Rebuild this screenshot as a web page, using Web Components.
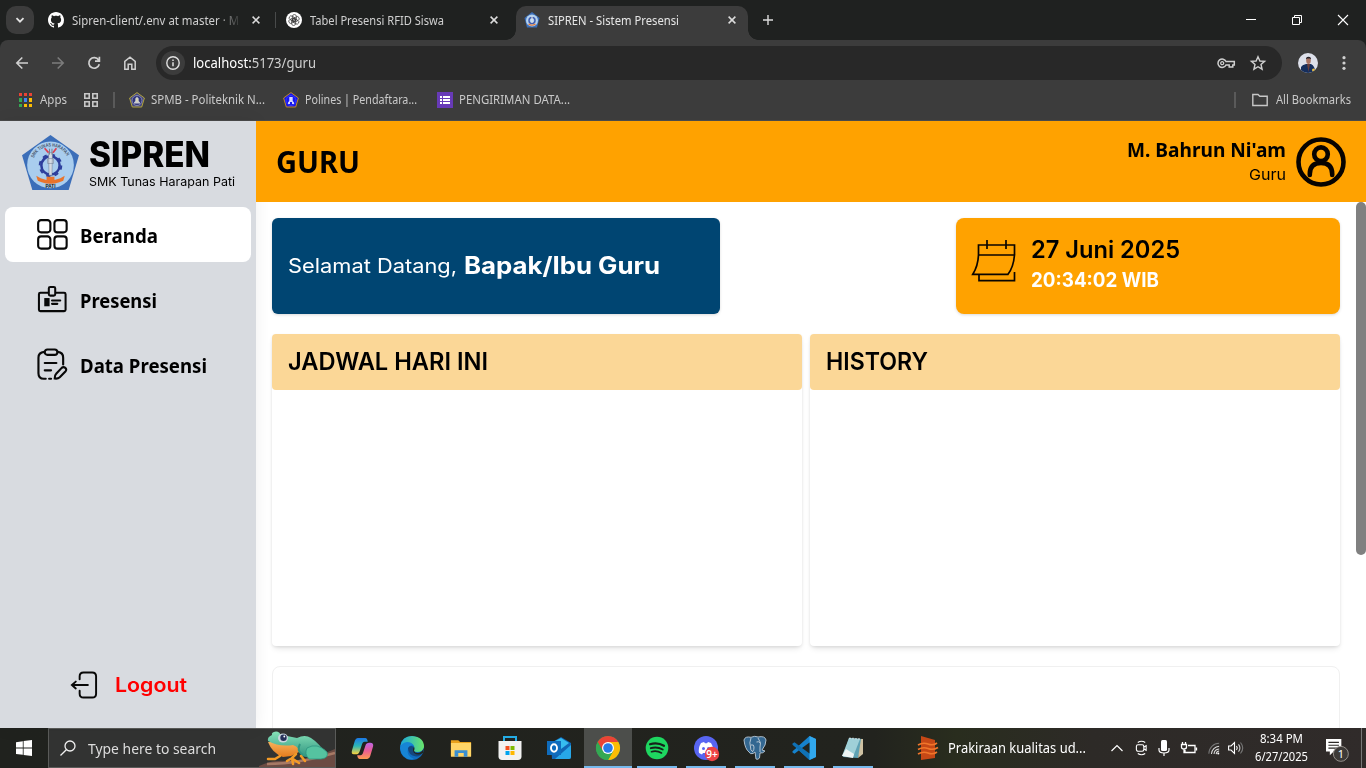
<!DOCTYPE html>
<html lang="id"><head><meta charset="utf-8"><title>SIPREN - Sistem Presensi</title>
<style>html,body{margin:0;height:100%;overflow:hidden;background:#fff}body{font-family:"Noto Sans","Open Sans",sans-serif}</style></head>
<body><desktop-screen></desktop-screen>
<script>
const ICONS={
chev:['0 0 10 10','<path d="M1.5 3.2 5 6.7 8.5 3.2" fill="none" stroke="#e3e3e3" stroke-width="1.8"/>'],
github:['0 0 16 16','<path fill="#fff" d="M8 0C3.58 0 0 3.58 0 8c0 3.54 2.29 6.53 5.47 7.59.4.07.55-.17.55-.38 0-.19-.01-.82-.01-1.49-2.01.37-2.53-.49-2.69-.94-.09-.23-.48-.94-.82-1.13-.28-.15-.68-.52-.01-.53.63-.01 1.08.58 1.23.82.72 1.21 1.87.87 2.33.66.07-.52.28-.87.51-1.07-1.78-.2-3.64-.89-3.64-3.95 0-.87.31-1.59.82-2.15-.08-.2-.36-1.02.08-2.12 0 0 .67-.21 2.2.82.64-.18 1.32-.27 2-.27s1.36.09 2 .27c1.53-1.04 2.2-.82 2.2-.82.44 1.1.16 1.92.08 2.12.51.56.82 1.27.82 2.15 0 3.07-1.87 3.75-3.65 3.95.29.25.54.73.54 1.48 0 1.07-.01 1.93-.01 2.2 0 .21.15.46.55.38A8.01 8.01 0 0 0 16 8c0-4.42-3.58-8-8-8z"/>'],
gpt:['0 0 16 16','<circle cx="8" cy="8" r="8" fill="#fff"/><g fill="none" stroke="#333" stroke-width=".7"><rect x="6.4" y="2.500" width="4" height="6.800" rx="2"/><rect x="6.4" y="2.500" width="4" height="6.800" rx="2" transform="rotate(60 8 8)"/><rect x="6.4" y="2.500" width="4" height="6.800" rx="2" transform="rotate(120 8 8)"/><rect x="6.4" y="2.500" width="4" height="6.800" rx="2" transform="rotate(180 8 8)"/><rect x="6.4" y="2.500" width="4" height="6.800" rx="2" transform="rotate(240 8 8)"/><rect x="6.4" y="2.500" width="4" height="6.800" rx="2" transform="rotate(300 8 8)"/></g>'],
x:['0 0 8 8','<path d="M.6.6 7.4 7.4M7.4.6.6 7.4" stroke="#dcdcdc" stroke-width="1.5"/>'],
plus:['0 0 10 10','<path d="M5 0V10M0 5H10" stroke="#dcdcdc" stroke-width="1.4"/>'],
min:['0 0 10 10','<path d="M0 4.5H10" stroke="#fff"/>'],
restore:['0 0 10 10','<path d="M.5 2.5H7.5V9.5H.5ZM2.5 2.500V.5H9.500V7.500H7.500" fill="none" stroke="#fff"/>'],
wx:['0 0 10 10','<path d="M0 0 10 10M10 0 0 10" stroke="#fff" stroke-width="1.1"/>'],
back:['0 0 14 14','<path d="M13 7H2M7.300 1.500 1.800 7 7.300 12.500" fill="none" stroke="#d0d0d0" stroke-width="1.600"/>'],
fwd:['0 0 14 14','<path d="M1 7H12M6.700 1.500 12.200 7 6.700 12.500" fill="none" stroke="#7c7c7c" stroke-width="1.600"/>'],
reload:['0 0 14 14','<path d="M11.600 4A5.300 5.300 0 1 0 12.300 8.300M12.400 .8V5.200H8" fill="none" stroke="#d0d0d0" stroke-width="1.700"/>'],
home:['0 0 14 14','<path d="M1.800 13.200V5.300L7 1.200 12.200 5.300V13.200H8.800V8.300H5.200V13.200Z" fill="none" stroke="#d0d0d0" stroke-width="1.500"/>'],
info:['0 0 24 24','<circle cx="12" cy="12" r="12" fill="#3c3c3c"/><circle cx="12" cy="12" r="6.200" fill="none" stroke="#e0e0e0" stroke-width="1.400"/><path d="M12 11.300V15.300M12 8.600V10" stroke="#e0e0e0" stroke-width="1.500"/>'],
key:['0 0 18 12','<path d="M9 4.500H17.300V8H15.800V10H12.200V8H9A4.200 4.200 0 1 1 9 4.500Z" fill="none" stroke="#d0d0d0" stroke-width="1.500"/><circle cx="5.200" cy="6.200" r="1.500" fill="none" stroke="#d0d0d0" stroke-width="1.300"/>'],
star:['0 0 16 16','<path d="M8 1.700 9.900 6 14.600 6.400 11 9.500 12.100 14.200 8 11.700 3.900 14.200 5 9.500 1.400 6.400 6.100 6Z" fill="none" stroke="#d0d0d0" stroke-width="1.400"/>'],
face:['0 0 20 20','<defs><clipPath id="c"><circle cx="10" cy="10" r="10"/></clipPath></defs><g clip-path="url(#c)"><path fill="#dde0ea" d="M0 0H20V20H0Z"/><path fill="#152e5c" d="M3 20V14Q4 12 8 11H13Q17 13 17.500 20Z"/><path fill="#6a3d38" d="M9 11 10.500 19 12 11Z"/><ellipse cx="10.500" cy="7.500" rx="2.300" ry="3.500" fill="#a67262"/><path fill="#25222a" d="M8 6.500Q7.700 3.700 10.500 3.700T13 6.500L12 5.500H9Z"/><circle cx="15.500" cy="17" r="1.500" fill="#e8be45"/></g>'],
dots:['0 0 4 14','<g fill="#d0d0d0"><circle cx="2" cy="1.700" r="1.600"/><circle cx="2" cy="7" r="1.600"/><circle cx="2" cy="12.300" r="1.600"/></g>'],
apps:['0 0 14 14','<path fill="#ea4335" d="M0 0H3V3H0ZM5 0H8V3H5ZM10 0H13V3H10Z"/><path fill="#34a853" d="M0 5H3V9H0ZM0 11H3V14H0Z"/><path fill="#4285f4" d="M5 5H8V9H5Z"/><path fill="#fbbc04" d="M10 5H13V9H10ZM5 11H8V14H5ZM10 11H13V14H10Z"/>'],
grid:['0 0 14 14','<path d="M.8.8H5.200V5.200H.8ZM8.800.8H13.200V5.200H8.800ZM.8 8.800H5.200V13.200H.8ZM8.800 8.800H13.200V13.200H8.800Z" fill="none" stroke="#c7c7c7" stroke-width="1.600"/>'],
polA:['0 0 16 16','<path d="M8 .6 15.400 6 12.700 15H3.300L.6 6Z" fill="#45477c" stroke="#b3a63b"/><circle cx="8" cy="8.500" r="5" fill="#30357b" stroke="#9a9cc0" stroke-width=".8"/><path d="M8 4.800 9.700 6.500V9L11 10.500V11.500H5V10.500L6.300 9V6.500Z" fill="#c9cbd0"/><path d="M7.500 6.500H8.500V9.500H7.500Z" fill="#e8e5a0"/>'],
polB:['0 0 16 16','<path d="M8 .6 15.400 6 12.700 15H3.300L.6 6Z" fill="#1414e8" stroke="#c08b28"/><circle cx="8" cy="8.500" r="5" fill="#1515f0" stroke="#4747ff" stroke-width=".7"/><path d="M6.300 5H9.700V9L11 10.500V12H9V10H7V12H5V10.500L6.300 9Z" fill="#d5d6ff"/>'],
form:['0 0 16 16','<path fill="#673ab7" d="M0 0H16V16H0Z"/><path fill="#fff" d="M3 4H5V6H3ZM6 4H13V6H6ZM3 7H5V9H3ZM6 7H13V9H6ZM3 10H5V12H3ZM6 10H13V12H6Z"/>'],
folder:['0 0 16 14','<path d="M.8 1.500H6L7.800 3.200H15.200V12.500H.8Z" fill="none" stroke="#c7c7c7" stroke-width="1.400"/>'],
school:['0 0 58 56','<path fill="#3b6eb9" d="M29 0 58 20.500 47.500 56H10.500L0 20.500Z"/><circle cx="29" cy="30.500" r="23.800" fill="#a9cdee"/><defs><path id="arc" d="M12 23.500A18.500 18.500 0 0 1 46.500 23.500"/></defs><text font-family="Liberation Sans" font-size="5" font-weight="700" fill="#46546b"><textPath href="#arc" textLength="42" lengthAdjust="spacingAndGlyphs">SMK TUNAS HARAPAN</textPath></text><circle cx="29" cy="31" r="9.300" fill="none" stroke="#2d3e9c" stroke-width="2.600"/><circle cx="29" cy="31" r="11" fill="none" stroke="#2d3e9c" stroke-width="2" stroke-dasharray="4.300 4.340"/><path fill="#d5dbe4" stroke="#66758b" stroke-width=".5" d="M27 18H31L30.500 41H27.500ZM26 24H32V29H26Z"/><path d="M28 14V20M30.500 14V20" stroke="#77808e"/><path d="M23 13.500 27 18M35 13.500 31.500 18" stroke="#db4052" stroke-width="1.800"/><path d="M14.500 41.500 19 44Q29 48 39 44L43.500 41.500 42 46.500 38 48Q29 51.500 20 48L16 46.500Z" fill="#e9742c"/><path d="M25 42.500H33V47H25Z" fill="#e9742c"/><text x="29" y="53.800" text-anchor="middle" font-family="Liberation Sans" font-size="4.800" font-weight="700" fill="#111">PATI</text>'],
schoolS:['0 0 16 16','<path fill="#3b6eb9" d="M8 0 15.500 6 13 15.500H3L.5 6Z"/><circle cx="8" cy="8.500" r="6" fill="#b5d2ed"/><circle cx="8" cy="8.500" r="3" fill="none" stroke="#405eb0" stroke-width="1.500"/><path d="M7.500 4H8.500V11H7.500Z" fill="#e7e9ee"/><path d="M4.500 12Q8 14.500 11.500 12" stroke="#e7742c" stroke-width="1.200" fill="none"/>'],
dash:['0 0 32 32','<g fill="none" stroke="#080808" stroke-width="2.200"><rect x="1.200" y="1.200" width="12.600" height="12.600" rx="3"/><rect x="18" y="1.200" width="12.600" height="12.600" rx="3"/><rect x="1.200" y="18" width="12.600" height="12.600" rx="3"/><rect x="18" y="18" width="12.600" height="12.600" rx="3"/></g>'],
badge:['0 0 32 32','<g fill="none" stroke="#080808" stroke-width="2.100"><path d="M12 9H3.500Q2 9 2 10.500V26.500Q2 28 3.500 28H28Q29.500 28 29.500 26.500V10.500Q29.500 9 28 9H19"/><rect x="12.200" y="3" width="6.600" height="9" rx="1.500"/><path d="M15.500 17H24M15.500 20.500H21" stroke-linecap="round"/></g><path fill="#080808" d="M7.500 14.500H13V23H7.500Z"/>'],
clip:['0 0 32 34','<g fill="none" stroke="#080808" stroke-width="2.200" stroke-linecap="round"><path d="M7.500 4Q1.500 4.500 1.500 10V26Q1.500 31.700 7 31.700H9M12.500 31.700H14.500M21.500 4Q27 4.500 27 10V17"/><rect x="8" y="1.500" width="13" height="5.500" rx="2.700"/><path d="M8 15.500H20M8 23H14.500"/><path d="M25.500 20.500Q27.300 18.800 29.200 20.500T29.300 24.200L23.500 30.200Q21.500 32 18.300 31.500 18.200 28 19.800 26.500Z"/></g>'],
logout:['0 0 28 30','<g fill="none" stroke="#080808" stroke-width="2" stroke-linecap="round"><path d="M9.500 8.500V5.500Q9.500 1.500 13.500 1.500H22.500Q26.500 1.500 26.500 5.500V23.500Q26.500 27.500 22.500 27.500H13.500Q9.500 27.500 9.500 23.500V20.500"/><path d="M18 14.500H1.500M5.500 11 1.500 14.500 5.500 18"/></g>'],
user:['0 0 50 50','<g fill="none" stroke="#080300" stroke-width="4.600"><circle cx="25" cy="25" r="22.500"/><circle cx="25" cy="17.200" r="6.800"/><path d="M13.800 38V37Q13.800 26 25 26T36.200 37V38" stroke-linecap="round"/></g>'],
cal:['0 0 44 43','<path d="M6.500 16V6H42.500V16M15 1V10M34 1V10M6.500 16H42.500Q41.500 28 36 35.300H.8Q6 27 6.500 16M7 35.300V41.700H42.500V33" fill="none" stroke="#0a0500" stroke-width="1.700"/>'],
win:['0 0 16 16','<path fill="#fff" d="M0 2.200 6.800 1.200V7.600H0ZM7.600 1.100 16 0V7.600H7.600ZM0 8.400H6.800V14.800L0 13.900ZM7.600 8.400H16V16L7.600 14.900Z"/>'],
search:['0 0 16 16','<circle cx="10" cy="6" r="5" fill="none" stroke="#f0f0f0" stroke-width="1.300"/><path d="M6.300 9.700.5 15.500" stroke="#f0f0f0" stroke-width="1.300"/>'],
frog:['0 0 76 38','<defs><linearGradient id="b" y2="1" x2="0"><stop stop-color="#86e3b9"/><stop offset="1" stop-color="#2b8f7c"/></linearGradient><linearGradient id="o" y2="1" x2="0"><stop stop-color="#f6b05b"/><stop offset="1" stop-color="#e57c1c"/></linearGradient></defs><path d="M0 37Q12 31 26 32L52 30 76 20V38H0Z" fill="#6c4b43"/><path d="M8 35Q38 35 76 24" stroke="#a77965" stroke-width="2.500" fill="none"/><path d="M9 13Q13 24 24 28L32 27 44 21 42 13Z" fill="url(#o)"/><path d="M9 12Q8 8 13 6Q12 3 17 2.500 21 3 21 5L28 7 38 9Q46 5 52 9 60 14 68 26 65 30 52 29L42 27Q41 18 34 16 20 18 9 12Z" fill="url(#b)"/><path d="M48 19Q58 13 68 23 70 29 62 30H50Q45 25 48 19Z" fill="#55c3a0" stroke="#2e9580" stroke-width=".8"/><path d="M41 15Q37 22 44 26" stroke="#2f9581" stroke-width="2" fill="none"/><ellipse cx="24" cy="9" rx="5" ry="4.500" fill="#cad6df"/><circle cx="24.500" cy="8.800" r="3.200" fill="#26305a"/><circle cx="25.300" cy="7.500" r=".9" fill="#fff"/><path d="M37 25 33 29 28 32M33 29 34 35M34 30 40 34M42 27 46 32M21 27 16 30 9 30" stroke="#f39a26" stroke-width="2.500" stroke-linecap="round" fill="none"/>'],
copilot:['0 0 24 24','<defs><linearGradient id="a" y2="1" x2="0"><stop stop-color="#1b78e8"/><stop offset=".5" stop-color="#2cb7b5"/><stop offset="1" stop-color="#ffd23c"/></linearGradient><linearGradient id="d" y2="1" x2="0"><stop stop-color="#bb65e5"/><stop offset=".5" stop-color="#ec5c93"/><stop offset="1" stop-color="#ff9b4f"/></linearGradient></defs><path d="M7 1H15Q17 1 17.500 5H14Q12 5 11 9L9 15Q8 18 5 18H3Q0 18 1 14L4 4Q5 1 7 1Z" fill="url(#a)"/><path d="M17 23H9Q7 23 6.500 19H10Q12 19 13 15L15 9Q16 6 19 6H20Q24 6 23 10L20 20Q19 23 17 23Z" fill="url(#d)"/>'],
edge:['0 0 24 24','<defs><linearGradient id="a"><stop stop-color="#1ba8dc"/><stop offset="1" stop-color="#6ae56a"/></linearGradient></defs><circle cx="12" cy="12" r="12" fill="#0f6cc0"/><path d="M.5 10Q2 0 12 0 24 1 24 11 23 16 17 16 13 16 14 13 15 10 12 8 6 5 .5 10Z" fill="url(#a)"/><path d="M0 12Q1 7 7 6Q12 6 14 10 10 8 8 12Q6 20 14 23Q2 25 0 12Z" fill="#1785d5"/><path d="M8 12Q10 9 13 10.500 14 12 13.500 14 13 18 18 18 21 18 23 16.500 20 21 16 20.500 8 19 8 12Z" fill="#14477f"/><path d="M14 10.500Q15 13 14 14.500 14.500 17 18 17 22 16.500 24 12L23 17Q18 20 14 17 12 14 14 10.500Z" fill="#22251f"/>'],
files:['0 0 24 20','<path d="M1 1H9L11 3H23V18H1Z" fill="#e9a21c"/><path d="M1 4H23V19H1Z" fill="#ffd567"/><path d="M5 19V12H19V19H15V15H9V19Z" fill="#3a8fd1"/>'],
store:['0 0 24 24','<path d="M6 6V1H18V6" fill="none" stroke="#24ace4" stroke-width="2"/><path d="M.5 5H23.500V21Q23 24 20 24H4Q1 24 .5 21Z" fill="#f2f2f2"/><path d="M7.500 10H11.500V14H7.500Z" fill="#f25022"/><path d="M12.500 10H16.500V14H12.500Z" fill="#7fba00"/><path d="M7.500 15H11.500V19H7.500Z" fill="#00a4ef"/><path d="M12.500 15H16.500V19H12.500Z" fill="#ffb900"/>'],
outlook:['0 0 24 24','<path d="M4 7 14 1 24 7V21Q24 23 22 23H5Z" fill="#1066b5"/><path d="M6 6 14 2 22 7 14 13Z" fill="#36bdf0"/><path d="M24 9V21Q24 23 22 23H8Z" fill="#27a7e8"/><path d="M0 5H14V19H0Z" fill="#0f6cbd"/><ellipse cx="7" cy="12" rx="3" ry="3.700" fill="none" stroke="#fff" stroke-width="1.900"/>'],
chrome:['0 0 24 24','<circle cx="12" cy="12" r="12" fill="#34a853"/><path d="M12 12 1.600 6A12 12 0 0 1 22.400 6Z" fill="#ea4335"/><path d="M12 6H22.400A12 12 0 0 1 12 24L17.200 15Z" fill="#fbbc04"/><path d="M1.600 6 6.800 15 12 12V6Z" fill="#ea4335"/><path d="M1.600 6A12 12 0 0 0 12 24L17.200 15 12 16 6.800 15Z" fill="#34a853"/><circle cx="12" cy="12" r="6" fill="#fff"/><circle cx="12" cy="12" r="4.800" fill="#287ae8"/>'],
spotify:['0 0 24 24','<circle cx="12" cy="12" r="11.300" fill="#1ed760"/><g fill="none" stroke="#17221a" stroke-linecap="round"><path d="M5 8.300Q12.500 6 19 9.800" stroke-width="2.200"/><path d="M5.800 12.200Q12 10.300 17.700 13.500" stroke-width="1.900"/><path d="M6.500 15.700Q11.800 14.200 16.500 17" stroke-width="1.600"/></g>'],
discord:['0 0 24 24','<circle cx="12" cy="12" r="12" fill="#5865f2"/><path d="M5 17Q4 12 7 7L10 6 11 7.300H13L14 6 17 7Q20 12 19 17L16 18.500 15 17H9L8 18.500Z" fill="#fff"/><circle cx="9.500" cy="12.500" r="1.500" fill="#5865f2"/><circle cx="14.500" cy="12.500" r="1.500" fill="#5865f2"/><circle cx="18" cy="18" r="7.200" fill="#ed4245"/><text x="18" y="21.600" text-anchor="middle" font-family="Noto Sans" font-size="10" font-weight="600" fill="#fff">9+</text>'],
pg:['0 0 24 24','<path d="M1 4Q2 0 8 1.300Q12-.5 15 1 22-.5 23 4 23 9 19 14L22 15Q20 17.500 17 17L16.500 22Q15 24 13 23L12 16 10 17.500Q7 18.500 6 16 2 13 1 4Z" fill="#336791" stroke="#aebdca" stroke-width="1"/><path d="M8 2Q6 7 7.500 11 7 14 10 16M15 2Q19 7 17 11L17 16M8 9Q11 8 11 11T10 15M13.500 6Q16 5 17 7" fill="none" stroke="#c3cfd9" stroke-width=".9"/>'],
vs:['0 0 24 24','<path d="M17.500 0 24 3V21L17.500 24 7 14.200 2.500 17.700.5 16.500V15.300L17.500 0Z" fill="#1682cc"/><path d="M.5 7.500 2.500 6.300 17.500 17.500V24L.5 8.700Z" fill="#1071b5"/><path d="M17.500 0 24 3V21L17.500 24Z" fill="#31a8ee"/><path d="M17.500 6.500V17.500L10 12ZM.5 9.500 4 12 .5 14.500Z" fill="#22251f"/>'],
note:['0 0 24 24','<path d="M8 2 22 3 17 22 2 21Z" fill="#5fa2b4"/><path d="M8 2 19 3 12 21 1 20Z" fill="#9fd0d8"/><path d="M1 20 5 13 13 18 12 22Z" fill="#eff4f4"/><path d="M20 3 22 3 22 18 17 22Z" fill="#cec1a2"/><path d="M9 1.500V3M12 1.700V3.200M15 2V3.400M18 2V3.500" stroke="#eee"/>'],
air:['0 0 22 24','<path d="M3 0 17 4V22L3 24Z" fill="#c64816"/><g fill="none" stroke="#f0762b" stroke-width="1.600"><path d="M0 9Q5 6 10 8T19 7M0 13.500Q5 10.500 10 12.500T20 11.500M0 18Q5 15 10 17T19 16"/></g>'],
up:['0 0 12 8','<path d="M.5 7 6 1.500 11.500 7" fill="none" stroke="#fff" stroke-width="1.200"/>'],
meet:['0 0 14 16','<g fill="none" stroke="#fff" stroke-width="1.200"><rect x="1.500" y="4.500" width="8" height="7" rx="1.800"/><path d="M9.500 7 12 5.500V10.500L9.500 9M3 2Q7-.5 11 2M3 14Q7 16.500 11 14"/></g>'],
mic:['0 0 12 16','<rect x="3" y="0" width="6" height="11" rx="1.500" fill="#fff"/><path d="M1 8V10Q1 13 6 13T11 10V8M6 13V16" fill="none" stroke="#fff" stroke-width="1.200"/>'],
bat:['0 0 16 12','<g fill="none" stroke="#fff" stroke-width="1.300"><path d="M7 3.500H14V10.500H4V8M15.500 5.500V8.500M1.500 0V2.500M4.500 0V2.500M.5 2.500H5.500V5Q5.500 7 3 7T.5 5ZM3 7V10.500H5"/></g>'],
wifi:['0 0 14 14','<g fill="none" stroke-width="1.200"><path d="M1 13A12 12 0 0 1 13 1" stroke="#777"/><path d="M4 13.500A9.500 9.500 0 0 1 13 4.500M7 13.500A6.500 6.500 0 0 1 13 7.500M9.500 13.500A4 4 0 0 1 13 10" stroke="#ddd"/></g><circle cx="12" cy="12.800" r="1.200" fill="#fff"/>'],
vol:['0 0 16 14','<g fill="none" stroke="#fff" stroke-width="1.100"><path d="M.6 5H3L6.500 1.500V12.500L3 9H.6Z"/><path d="M8.500 5Q10 7 8.500 9"/><path d="M10.500 3.300Q13.300 7 10.500 10.700" stroke="#ccc"/><path d="M12.500 1.500Q17 7 12.500 12.500" stroke="#777"/></g>'],
notif:['0 0 26 24','<path d="M1 0H17V13H9L5 17V13H1Z" fill="#fff"/><path d="M3.500 3.500H14.500M3.500 6.500H14.500M3.500 9.500H14.500" stroke="#2d2a27" stroke-width="1.100"/><circle cx="16.500" cy="15.500" r="7.800" fill="#3d3a38" stroke="#98928e"/><text x="16.500" y="19.600" text-anchor="middle" font-family="Noto Sans" font-size="11.500" fill="#fff">1</text>']
};
class UiIcon extends HTMLElement{connectedCallback(){if(this.shadowRoot)return;const [v,b]=ICONS[this.getAttribute('name')],w=this.getAttribute('w'),h=this.getAttribute('h')||w;
this.attachShadow({mode:'open'}).innerHTML=`<style>:host{display:block;flex:none;width:${w}px;height:${h}px}svg{display:block;width:100%;height:100%;overflow:visible}</style><svg viewBox="${v}">${b}</svg>`}}
customElements.define('ui-icon',UiIcon);

/* One line of text, condensed or expanded horizontally to the width in "w". */
const FACES={ui:'"Noto Sans","Open Sans",sans-serif',geo:'Inter,"Open Sans",sans-serif'};
class UiText extends HTMLElement{connectedCallback(){if(this.shadowRoot)return;
const a=(n,d)=>this.getAttribute(n)||d,size=a('size','12'),wt=a('weight','400'),w=+a('w'),face=FACES[a('face','ui')];
const c=document.createElement('canvas').getContext('2d');c.font=`${wt} ${size}px ${face}`;const k=w/c.measureText(this.textContent).width;
this.attachShadow({mode:'open'}).innerHTML=`<style>:host{display:block;flex:none;width:${w}px;font:${wt} ${size}px/${a('lh',size)}px ${face};white-space:nowrap}span{display:inline-block;transform:scaleX(${k});transform-origin:0 50%}</style><span><slot></slot></span>`}}
customElements.define('ui-text',UiText);

function define(name,css,html){const t=document.createElement('template');t.innerHTML=`<style>${css}</style>${html}`;
customElements.define(name,class extends HTMLElement{constructor(){super();this.attachShadow({mode:'open'}).append(t.content.cloneNode(true))}})}

define('browser-tab',`:host{display:flex;flex:none;align-items:center;box-sizing:border-box;width:238px;height:34px;margin-top:6px;padding:0 18px 6px 8px;gap:8px;color:#d0d0d0;position:relative}
:host([active]){width:232px;padding-right:12px;background:#3c3c3c;border-radius:10px 10px 0 0;color:#e6e6e6}
:host([active])::before,:host([active])::after{content:"";position:absolute;bottom:0;width:10px;height:10px}
:host([active])::before{right:100%;background:radial-gradient(circle at 0 0,transparent 9.500px,#3c3c3c 10px)}
:host([active])::after{left:100%;background:radial-gradient(circle at 100% 0,transparent 9.500px,#3c3c3c 10px)}
:host([sep])::after{content:"";position:absolute;right:2px;top:6px;width:1px;height:16px;background:#494b4b}
.t{flex:1;min-width:0;overflow:hidden;padding-top:2px}:host([fade]) .t{-webkit-mask:linear-gradient(90deg,#000 145px,transparent 170px)}`,
`<slot name="icon"></slot><div class="t"><slot></slot></div><ui-icon name="x" w="8"></ui-icon>`);

define('tab-strip',`:host{display:flex;height:40px;background:#1f2120;color:#ddd}
.menu{width:28px;height:28px;margin:6px 6px 0;border-radius:10px;background:#3c3c3c;display:grid;place-items:center}
.plus{width:40px;display:grid;place-items:center}.win{margin-left:auto;display:flex}.win div{width:46px;display:grid;place-items:center}`,
`<div class="menu"><ui-icon name="chev" w="10"></ui-icon></div>
<browser-tab sep fade><ui-icon slot="icon" name="github" w="16"></ui-icon><ui-text w="167" lh="14">Sipren-client/.env at master · M</ui-text></browser-tab>
<browser-tab><ui-icon slot="icon" name="gpt" w="16"></ui-icon><ui-text w="134" lh="14">Tabel Presensi RFID Siswa</ui-text></browser-tab>
<browser-tab active><ui-icon slot="icon" name="schoolS" w="16"></ui-icon><ui-text w="131" lh="14">SIPREN - Sistem Presensi</ui-text></browser-tab>
<div class="plus"><ui-icon name="plus" w="10"></ui-icon></div>
<div class="win"><div><ui-icon name="min" w="10"></ui-icon></div><div><ui-icon name="restore" w="10"></ui-icon></div><div><ui-icon name="wx" w="10"></ui-icon></div></div>`);

define('tool-bar',`:host{display:block;background:#1f2120}.bar{display:flex;align-items:center;box-sizing:border-box;height:46px;background:#3c3c3c;border-radius:8px 8px 0 0;padding:0 20px 0 15px}
.nav{display:flex;gap:22px;width:141px}.url{flex:none;display:flex;align-items:center;box-sizing:border-box;width:1126px;height:34px;border-radius:17px;background:#282828;padding:0 16px 0 5px;color:#cfcfcf}
ui-text{margin-left:8px}b{font-weight:400;color:#fff}.r{margin-left:auto;display:flex;align-items:center;gap:15px}.face{margin-left:16px}.dots{margin-left:auto}`,
`<div class="bar"><div class="nav"><ui-icon name="back" w="14"></ui-icon><ui-icon name="fwd" w="14"></ui-icon><ui-icon name="reload" w="14"></ui-icon><ui-icon name="home" w="14"></ui-icon></div>
<div class="url"><ui-icon name="info" w="24"></ui-icon><ui-text w="123" size="14"><b>localhost:</b>5173/guru</ui-text><div class="r"><ui-icon name="key" w="18" h="12"></ui-icon><ui-icon name="star" w="16"></ui-icon></div></div>
<ui-icon class="face" name="face" w="20"></ui-icon><ui-icon class="dots" name="dots" w="4" h="14"></ui-icon></div>`);

define('book-marks',`:host{display:flex;align-items:center;box-sizing:border-box;height:35px;background:#3c3c3c;border-bottom:1px solid #4a4a4a;padding:0 15px 6px 19px;color:#c9c9c9}
i{width:2px;height:16px;background:#5a5a5a}.a{margin-right:7px}.b{margin-right:6px}.m{margin-right:18px}`,
`<ui-icon class="a" name="apps" w="14"></ui-icon><ui-text w="27">Apps</ui-text><ui-icon name="grid" w="14" style="margin:0 15px 0 17px"></ui-icon><i style="margin-right:14px"></i>
<ui-icon class="b" name="polA" w="16"></ui-icon><ui-text class="m" w="114">SPMB - Politeknik N...</ui-text>
<ui-icon class="b" name="polB" w="16"></ui-icon><ui-text w="112" style="margin-right:20px">Polines | Pendaftara...</ui-text>
<ui-icon class="b" name="form" w="16"></ui-icon><ui-text w="111">PENGIRIMAN DATA...</ui-text>
<i style="margin:0 16px 0 auto"></i><ui-icon name="folder" w="16" h="14" style="margin-right:8px"></ui-icon><ui-text w="75">All Bookmarks</ui-text>`);

define('nav-item',`:host{display:flex;align-items:center;box-sizing:border-box;height:55px;padding-left:32px;gap:12px;border-radius:8px}:host([active]){background:#fff}slot:not([name]){display:block}div{padding-top:2px}`,
`<slot name="icon"></slot><div><slot></slot></div>`);

define('side-bar',`:host{display:flex;flex-direction:column;flex:none;box-sizing:border-box;width:256px;background:#d8dbe0;padding:14px 5px 28px;color:#000;position:relative;box-shadow:0 0 15px rgba(0,0,0,.07)}
.brand{display:flex;height:72px;padding-left:17px;gap:10px}.names{padding-top:2px}nav{display:flex;flex-direction:column;gap:10px}
.out{margin-top:auto;display:flex;align-items:center;gap:17px;padding-left:65px;color:#f00}.out ui-text{margin-bottom:2px}`,
`<div class="brand"><ui-icon name="school" w="57" h="55"></ui-icon><div class="names"><ui-text w="121" size="35" weight="800" lh="34" face="geo">SIPREN</ui-text><ui-text w="146" size="12" lh="22" face="geo">SMK Tunas Harapan Pati</ui-text></div></div>
<nav><nav-item active><ui-icon slot="icon" name="dash" w="31"></ui-icon><ui-text w="78" size="19.500" weight="700">Beranda</ui-text></nav-item>
<nav-item><ui-icon slot="icon" name="badge" w="31"></ui-icon><ui-text w="77" size="19.500" weight="700">Presensi</ui-text></nav-item>
<nav-item><ui-icon slot="icon" name="clip" w="31" h="33"></ui-icon><ui-text w="127" size="19.500" weight="700">Data Presensi</ui-text></nav-item></nav>
<div class="out"><ui-icon name="logout" w="28" h="29"></ui-icon><ui-text w="72" size="20" weight="600" face="geo">Logout</ui-text></div>`);

define('page-header',`:host{display:flex;align-items:center;justify-content:space-between;flex:none;box-sizing:border-box;height:81px;background:#ffa200;padding:0 20px;color:#000;position:relative;z-index:1}.u{display:flex;align-items:center;gap:10px}.n{display:flex;flex-direction:column;align-items:flex-end;padding-top:3px}`,
`<ui-text w="84" size="29.500" weight="700">GURU</ui-text><div class="u"><div class="n"><ui-text w="159" size="19.500" weight="700" lh="24">M. Bahrun Ni'am</ui-text><ui-text w="37" size="15" lh="26" face="geo">Guru</ui-text></div><ui-icon name="user" w="50"></ui-icon></div>`);

define('list-panel',`:host{display:block;flex:1;height:312px;border-radius:4px;background:#fff;box-shadow:0 4px 6px -2px rgba(0,0,0,.12),0 1px 3px rgba(0,0,0,.08)}header{display:flex;align-items:center;height:56px;box-sizing:border-box;padding-left:16px;border-radius:4px;background:#fbd797}`,`<header><slot></slot></header>`);

define('guru-page',`:host{display:flex;flex:1;min-height:0;background:#fff}main{flex:1;display:flex;flex-direction:column;min-width:0}
.view{flex:1;min-height:0;display:flex;overflow:hidden}.body{flex:1;padding:16px 16px 0;display:flex;flex-direction:column}.row{display:flex;justify-content:space-between;gap:8px;margin-bottom:20px}
.card{display:flex;align-items:center;box-sizing:border-box;height:96px;padding:0 16px;border-radius:6px;box-shadow:0 1px 3px rgba(0,0,0,.15)}
.hi{width:448px;background:#004572;color:#fff;gap:7px}.date{width:384px;background:#ffa200;color:#000;gap:15px;border-radius:8px;align-items:flex-start;padding-top:17px}.date ui-icon{margin-top:4px}
.box{flex:none;height:120px;border:1px solid #f0f0f0;border-radius:8px}.scroll{width:10px}.scroll div{height:353px;border-radius:5px;background:#808080}`,
`<side-bar></side-bar><main><page-header></page-header><div class="view"><div class="body">
<div class="row"><div class="card hi"><ui-text w="169" size="20" face="geo">Selamat Datang,</ui-text><ui-text w="196" size="24" weight="700" face="geo">Bapak/Ibu Guru</ui-text></div>
<div class="card date"><ui-icon name="cal" w="44" h="43"></ui-icon><div><ui-text w="149" size="24" weight="600" lh="30" face="geo">27 Juni 2025</ui-text><ui-text style="color:#fff" w="128" size="20" weight="700" lh="31" face="geo">20:34:02 WIB</ui-text></div></div></div>
<div class="row"><list-panel><ui-text w="200" size="24" weight="600" face="geo">JADWAL HARI INI</ui-text></list-panel><list-panel><ui-text w="102" size="24" weight="600" face="geo">HISTORY</ui-text></list-panel></div>
<div class="box"></div></div><div class="scroll"><div></div></div></div></main>`);

define('task-app',`:host{display:grid;place-items:center;box-sizing:border-box;width:49px;height:40px;position:relative}:host([open])::after{content:"";position:absolute;bottom:0;left:5px;width:40px;height:2px;background:#76b9ed}:host([current]){background:linear-gradient(90deg,transparent 1px,#4c4e4b 1px)}:host([current])::after{left:1px!important;width:48px!important}`,`<slot></slot>`);

const APPS=[['copilot',23,23],['edge',24,24],['files',22,19],['store',24,24],['outlook',24,24],['chrome',24,24],['spotify',24,24],['discord',24,24],['pg',24,24],['vs',24,24],['note',24,24]];
define('task-bar',`:host{display:flex;align-items:center;height:40px;flex:none;background:linear-gradient(90deg,#20221e,#22231e 64%,#292d1e 70%,#2d2a27 80%,#302b2a);color:#fff}
.start{width:48px;display:grid;place-items:center}.search{display:flex;align-items:center;box-sizing:border-box;width:288px;height:40px;border:1px solid #5a5b59;background:#323332;padding-left:11px;gap:12px;color:#ddd;overflow:hidden}.search .frog{margin-left:auto}
.apps{display:flex;margin-left:2px}.tray{margin-left:auto;display:flex;align-items:center}.clock{display:flex;flex-direction:column;align-items:center;width:53px;margin:0 17px 0 11px}.end{width:1px;height:40px;background:#777;margin:0 4px 0 11px}`,
`<div class="start"><ui-icon name="win" w="16"></ui-icon></div><div class="search"><ui-icon name="search" w="16"></ui-icon><ui-text w="128" size="15">Type here to search</ui-text><ui-icon class="frog" name="frog" w="76" h="38"></ui-icon></div>
<div class="apps">${APPS.map(([n,w,h],i)=>`<task-app ${i>4?'open':''} ${i==5?'current':''}><ui-icon name="${n}" w="${w}" h="${h}"></ui-icon></task-app>`).join('')}</div>
<div class="tray"><ui-icon name="air" w="22" h="24" style="margin-right:8px"></ui-icon><ui-text w="138" size="14">Prakiraan kualitas ud...</ui-text><ui-icon name="up" w="12" h="8" style="margin:0 12px 0 25px"></ui-icon><ui-icon name="meet" w="13" h="16" style="margin-right:10px"></ui-icon><ui-icon name="mic" w="12" h="16" style="margin-right:11px"></ui-icon><ui-icon name="bat" w="16" h="12" style="margin-right:11px"></ui-icon><ui-icon name="wifi" w="12" h="13" style="margin-right:8px"></ui-icon><ui-icon name="vol" w="16" h="14"></ui-icon>
<div class="clock"><ui-text w="43" lh="18">8:34 PM</ui-text><ui-text w="53" lh="18">6/27/2025</ui-text></div><ui-icon name="notif" w="25" h="23" style="margin-top:4px"></ui-icon><div class="end"></div></div>`);

define('desktop-screen',`:host{display:flex;flex-direction:column;width:1366px;height:768px;overflow:hidden}`,`<tab-strip></tab-strip><tool-bar></tool-bar><book-marks></book-marks><guru-page></guru-page><task-bar></task-bar>`);
</script></body></html>
